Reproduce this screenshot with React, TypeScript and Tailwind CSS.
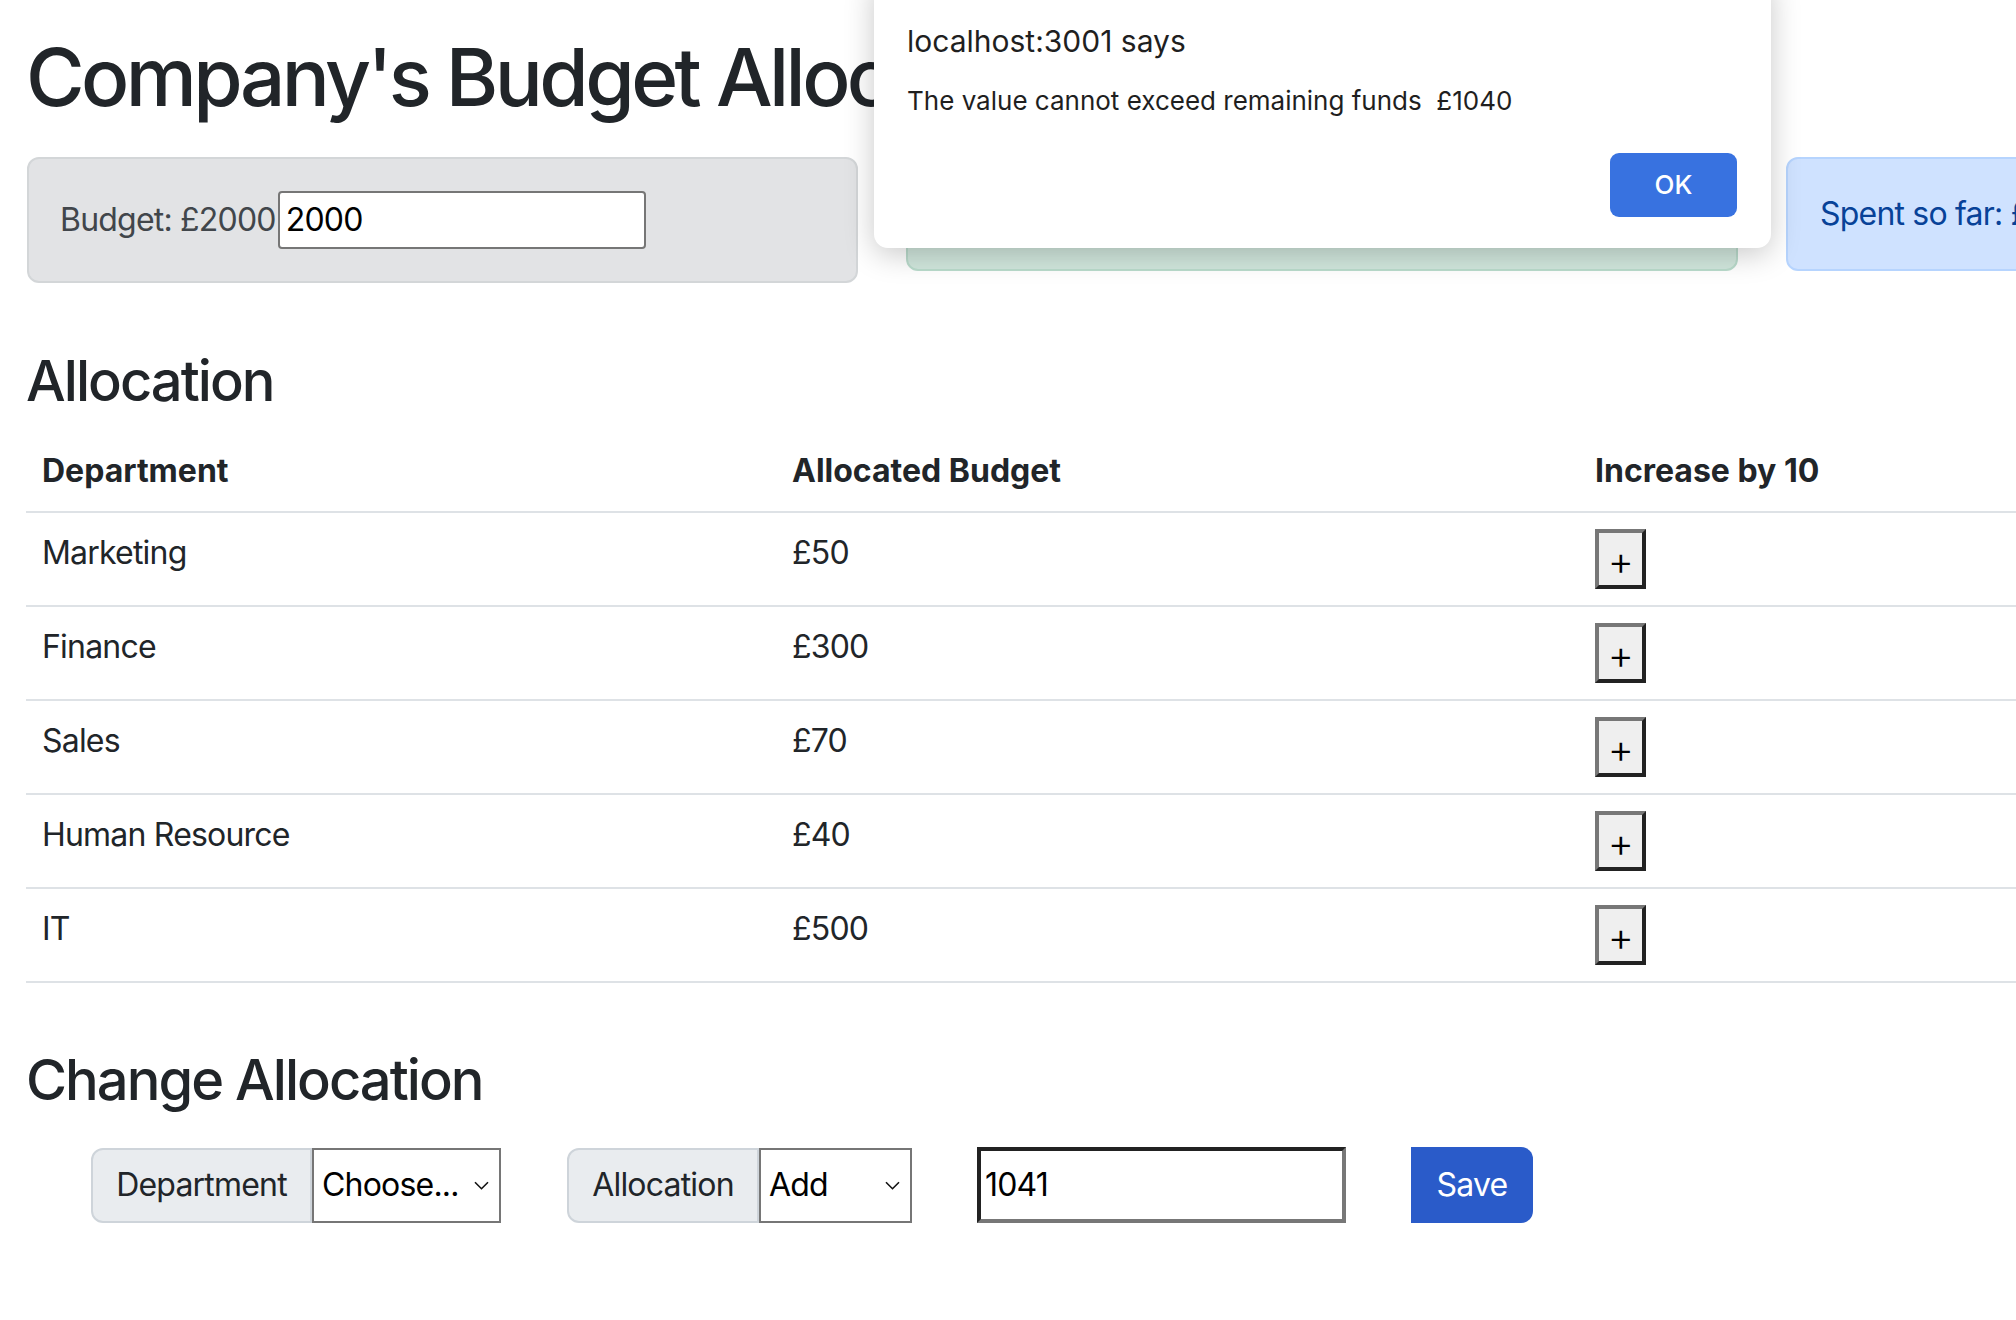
import React from "react";

const departments = [
  { name: "Marketing", budget: 50 },
  { name: "Finance", budget: 300 },
  { name: "Sales", budget: 70 },
  { name: "Human Resource", budget: 40 },
  { name: "IT", budget: 500 },
];

const Chevron = () => (
  <svg width="15" height="9" viewBox="0 0 15 9" fill="none" className="shrink-0">
    <path d="M1 1.2l6.5 6.5L14 1.2" stroke="#111" strokeWidth="1.6" />
  </svg>
);

const FakeSelect = ({ value, width }: { value: string; width: string }) => (
  <div className={`flex h-[75px] ${width} items-center justify-between border-2 border-[#767676] bg-white pl-[8px] pr-[10px] text-black`}>
    <span>{value}</span>
    <Chevron />
  </div>
);

const App = () => {
  const total = departments.reduce((s, d) => s + d.budget, 0);
  const budget = 2000;

  return (
    <div className="relative h-[1320px] w-[2016px] overflow-hidden bg-white font-['Inter',sans-serif] text-[32px] leading-[48px] tracking-[-0.025em] text-[#212529]">
      <div className="w-[2640px] pl-[26px]">
        <h1 className="pt-[29px] text-[80px] font-medium leading-[96px] tracking-[-0.045em]">Company's Budget Allocation</h1>

        <div className="ml-px mt-[32px] flex items-start gap-[48px]">
          <div className="flex w-[831px] items-center rounded-[12px] border-2 border-[#d3d6d8] bg-[#e2e3e5] px-[31px] py-[32px] text-[#41464b]">
            <span>Budget: £{budget}</span>
            <div className="ml-[2px] flex h-[58px] w-[368px] items-center rounded-[4px] border-2 border-[#767676] bg-white px-[6px] text-black">
              {budget}
            </div>
          </div>
          <div className="w-[832px] rounded-[12px] border-2 border-[#badbcc] bg-[#d1e7dd] px-[30px] py-[31px] text-[#0f5132]">
            Remaining: £{budget - total}
          </div>
          <div className="w-[831px] rounded-[12px] border-2 border-[#b6d4fe] bg-[#cfe2ff] px-[32px] py-[31px] text-[#084298]">
            Spent so far: £{total}
          </div>
        </div>

        <h3 className="mt-[65px] text-[56px] font-medium leading-[67px] tracking-[-0.035em]">Allocation</h3>

        <div className="mt-[16px] w-[2588px]">
          <div className="grid grid-cols-[750px_803px_1035px] border-b-2 border-[#dee2e6] font-bold tracking-normal">
            <div className="p-[16px]">Department</div>
            <div className="p-[16px]">Allocated Budget</div>
            <div className="p-[16px]">Increase by 10</div>
          </div>
          {departments.map((d) => (
            <div key={d.name} className="grid grid-cols-[750px_803px_1035px] border-b-2 border-[#dee2e6]">
              <div className="p-[16px]">{d.name}</div>
              <div className="p-[16px]">£{d.budget}</div>
              <div className="p-[16px]">
                <button className="flex h-[60px] w-[51px] items-center justify-center border-4 border-t-[#777] border-l-[#777] border-r-[#222] border-b-[#222] bg-[#efefef] pt-[4px] text-[40px] font-light leading-none text-black">
                  +
                </button>
              </div>
            </div>
          ))}
        </div>

        <h3 className="mt-[64px] text-[56px] font-medium leading-[67px] tracking-[-0.035em]">Change Allocation</h3>

        <div className="ml-[65px] mt-[33px] flex items-center">
          <div className="flex items-center">
            <div className="flex h-[75px] w-[221px] items-center justify-center rounded-l-[12px] border-2 border-[#ced4da] bg-[#e9ecef]">
              Department
            </div>
            <FakeSelect value="Choose..." width="w-[189px]" />
          </div>

          <div className="ml-[66px] flex items-center">
            <div className="flex h-[75px] w-[192px] items-center justify-center rounded-l-[12px] border-2 border-[#ced4da] bg-[#e9ecef]">
              Allocation
            </div>
            <FakeSelect value="Add" width="w-[153px]" />
          </div>

          <div className="ml-[65px] flex h-[76px] w-[369px] items-center border-4 border-t-[#222] border-l-[#222] border-r-[#777] border-b-[#777] bg-white pl-[4px] text-black">
            1041
          </div>

          <button className="ml-[65px] flex h-[76px] w-[122px] items-center justify-center rounded-r-[12px] bg-[#2a5bc9] text-white">
            Save
          </button>
        </div>
      </div>

      {/* browser alert */}
      <div className="absolute left-[874px] top-[-24px] h-[272px] w-[897px] rounded-[14px] bg-white pl-[33px] pr-[34px] pt-[47px] tracking-normal shadow-[0_6px_30px_rgba(0,0,0,0.22)]">
        <div className="text-[30px] leading-[36px] text-[#1f1f1f]">localhost:3001 says</div>
        <div className="mt-[26px] whitespace-pre text-[26px] leading-[32px] text-[#1f1f1f]">The value cannot exceed remaining funds  £1040</div>
        <div className="mt-[36px] flex justify-end">
          <button className="flex h-[64px] w-[127px] items-center justify-center rounded-[9px] bg-[#3872e0] text-[26px] font-medium text-white">
            OK
          </button>
        </div>
      </div>
    </div>
  );
};

export default App;
